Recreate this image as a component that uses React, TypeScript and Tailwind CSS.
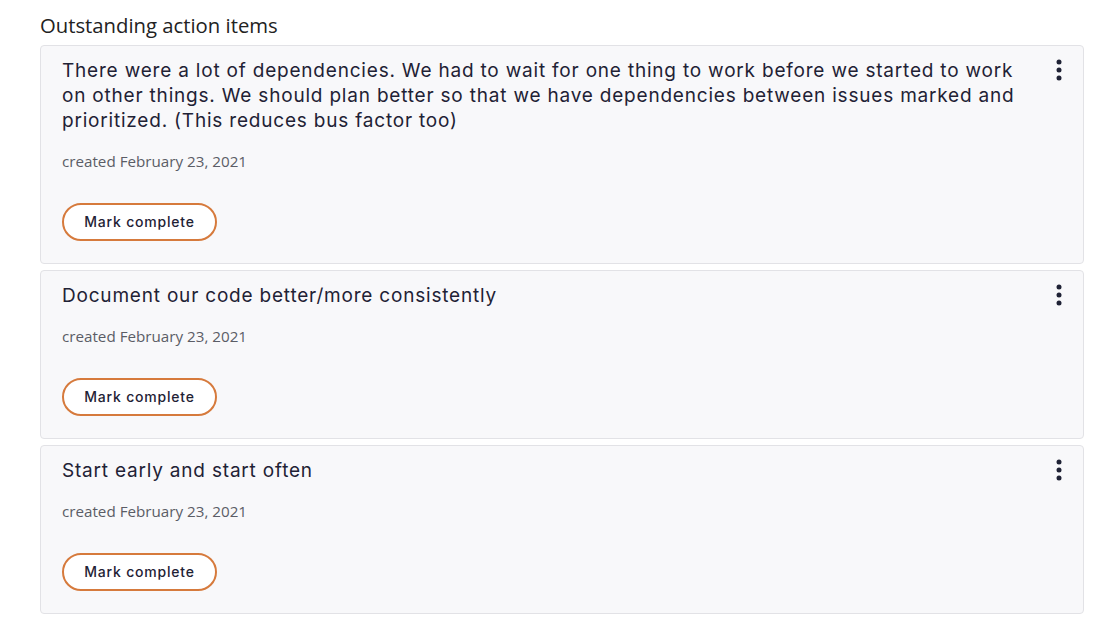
const items = [
  {
    id: 1,
    text: "There were a lot of dependencies. We had to wait for one thing to work before we started to work on other things. We should plan better so that we have dependencies between issues marked and prioritized. (This reduces bus factor too)",
    created: "February 23, 2021",
  },
  {
    id: 2,
    text: "Document our code better/more consistently",
    created: "February 23, 2021",
  },
  {
    id: 3,
    text: "Start early and start often",
    created: "February 23, 2021",
  },
];

function KebabIcon() {
  return (
    <svg width="6" height="22" viewBox="0 0 6 22" className="text-[#1f2235]">
      <circle cx="3" cy="3" r="2.5" fill="currentColor" />
      <circle cx="3" cy="11" r="2.5" fill="currentColor" />
      <circle cx="3" cy="19" r="2.5" fill="currentColor" />
    </svg>
  );
}

function ActionItemCard({ text, created }: { text: string; created: string }) {
  return (
    <div className="relative rounded-[4px] border border-[#e2e2e6] bg-[#f8f8fa] pl-[21px] pr-[52px] pt-[12px] pb-[22px]">
      <p className="text-[19px] leading-[25px] tracking-[0.8px] text-[#1f2235] font-['Inter',sans-serif]">
        {text}
      </p>
      <p className="mt-[16.5px] text-[15.2px] leading-[22px] text-[#5b5d66] font-['Open_Sans',sans-serif]">
        created {created}
      </p>
      <button
        type="button"
        className="mt-[31px] h-[38px] w-[155px] rounded-full border-2 border-[#d67a3c] bg-white text-[14px] font-medium tracking-[0.8px] text-[#1f2235] font-['Inter',sans-serif]"
      >
        Mark complete
      </button>
      <button type="button" className="absolute right-[17px] top-[13px] px-1">
        <KebabIcon />
      </button>
    </div>
  );
}

export default function App() {
  return (
    <div className="min-h-screen bg-white pl-[40px] pr-[15px] pt-[12px]">
      <h2 className="text-[20.3px] leading-[27px] text-[#222] font-['Open_Sans',sans-serif]">
        Outstanding action items
      </h2>
      <div className="mt-[6px] flex flex-col gap-[6.5px]">
        {items.map((item) => (
          <ActionItemCard key={item.id} text={item.text} created={item.created} />
        ))}
      </div>
    </div>
  );
}
